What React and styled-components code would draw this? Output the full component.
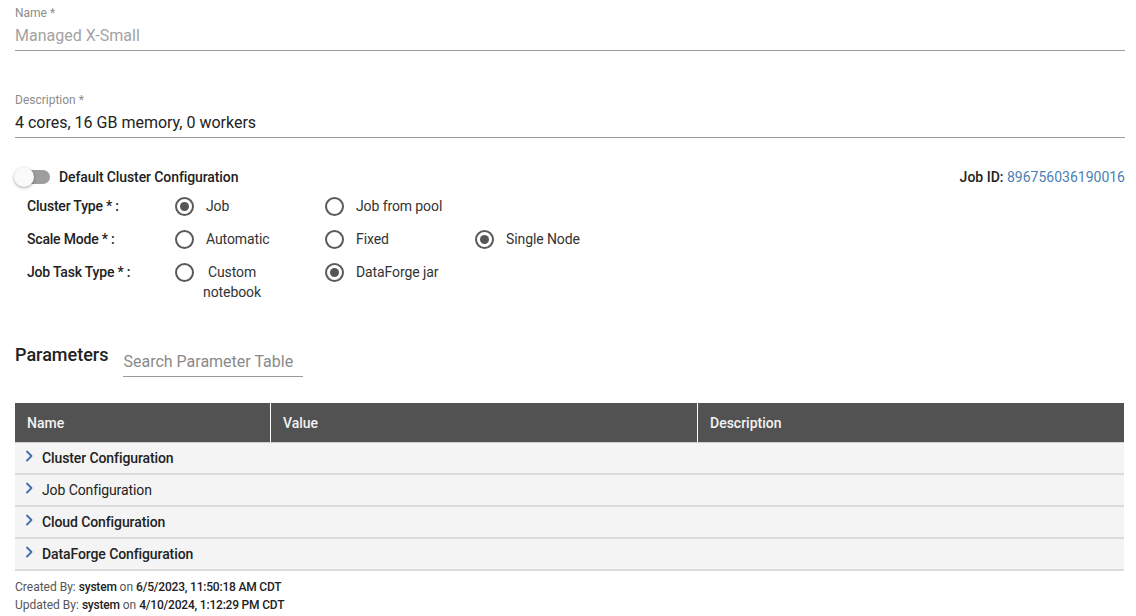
import React, { useState } from 'react';
import styled, { createGlobalStyle } from 'styled-components';

const GlobalStyle = createGlobalStyle`
  body {
    margin: 0;
    font-family: Roboto, "Liberation Sans", sans-serif;
    color: #222;
    background: #fff;
  }
`;

const Page = styled.div`
  padding: 5px 11px 0 15px;
`;

const Field = styled.div`
  margin-top: ${p => p.$top || 0}px;
  border-bottom: 1px solid #9a9a9a;
  padding-bottom: 5px;
`;

const FieldLabel = styled.div`
  font-size: 12px;
  line-height: 16px;
  color: #8c8c8c;
`;

const FieldValue = styled.div`
  margin-top: 5px;
  font-size: 16px;
  line-height: 19px;
  color: ${p => (p.$disabled ? '#a3a3a3' : '#222')};
`;

const ToggleRow = styled.div`
  display: flex;
  align-items: center;
  justify-content: space-between;
  margin-top: 29px;
  height: 20px;
`;

const ToggleLabel = styled.label`
  display: flex;
  align-items: center;
  gap: 9px;
  font-size: 14px;
  font-weight: 500;
  letter-spacing: -0.1px;
  cursor: pointer;
`;

const Track = styled.span`
  position: relative;
  display: inline-block;
  width: 34px;
  height: 14px;
  margin-left: 1px;
  border-radius: 7px;
  background: ${p => (p.$on ? '#8fb0d8' : '#9e9e9e')};
`;

const Thumb = styled.span`
  position: absolute;
  top: -3px;
  left: ${p => (p.$on ? '14px' : '-2px')};
  width: 20px;
  height: 20px;
  border-radius: 50%;
  background: ${p => (p.$on ? '#4a7fb5' : '#fafafa')};
  box-shadow: 0 1px 3px rgba(0, 0, 0, 0.35);
`;

const JobId = styled.div`
  font-size: 14px;
  font-weight: 500;
  span {
    font-weight: 400;
    color: #4a7fb5;
  }
`;

const RadioGroup = styled.div`
  margin-top: 9px;
`;

const RadioRow = styled.div`
  display: flex;
  align-items: flex-start;
  min-height: 33px;
`;

const RowLabel = styled.div`
  width: 148px;
  padding-left: 12px;
  font-size: 14px;
  font-weight: 500;
  letter-spacing: -0.2px;
  line-height: 20px;
`;

const Option = styled.label`
  display: flex;
  align-items: flex-start;
  width: 150px;
  cursor: pointer;
`;

const Circle = styled.span`
  flex: none;
  box-sizing: border-box;
  width: 19px;
  height: 19px;
  margin-top: 1px;
  border: 2px solid #5a5a5a;
  border-radius: 50%;
  display: flex;
  align-items: center;
  justify-content: center;
  &::after {
    content: '';
    width: 9px;
    height: 9px;
    border-radius: 50%;
    background: #555;
    display: ${p => (p.$checked ? 'block' : 'none')};
  }
`;

const OptionText = styled.span`
  margin-left: ${p => (p.$narrow ? 9 : 12)}px;
  max-width: ${p => (p.$narrow ? '58px' : 'none')};
  text-align: center;
  font-size: 14px;
  line-height: 20px;
  letter-spacing: -0.1px;
  color: #333;
`;

const ParamsHeader = styled.div`
  display: flex;
  align-items: flex-end;
  gap: 15px;
  margin-top: 43px;
`;

const Heading = styled.h2`
  margin: 0 0 12px;
  font-size: 18px;
  font-weight: 500;
  line-height: 20px;
`;

const Search = styled.input`
  width: 180px;
  border: none;
  border-bottom: 1px solid #9a9a9a;
  padding: 4px 0 5px;
  font-family: inherit;
  font-size: 16px;
  line-height: 19px;
  color: #222;
  outline: none;
  &::placeholder {
    color: #8a8a8a;
  }
`;

const Table = styled.div`
  margin-top: 26px;
  margin-right: 1px;
`;

const HeadRow = styled.div`
  display: grid;
  grid-template-columns: 255px 1fr 1fr;
  background: #525252;
  border-bottom: 1px solid #cfcfcf;
`;

const HeadCell = styled.div`
  height: 39px;
  display: flex;
  align-items: center;
  padding-left: 12px;
  font-size: 14px;
  font-weight: 500;
  color: #f2f2f2;
  & + & {
    border-left: 1px solid #fff;
  }
`;

const GroupRow = styled.div`
  display: flex;
  align-items: center;
  gap: 5px;
  height: 30px;
  padding-left: 6px;
  background: #f4f4f4;
  border-bottom: 2px solid #dcdcdc;
  font-size: 14px;
  font-weight: ${p => (p.$bold ? 500 : 400)};
  letter-spacing: -0.1px;
  color: #222;
  cursor: pointer;
`;

const Chevron = styled.svg`
  width: 16px;
  height: 16px;
  margin-top: -4px;
  color: #3d6fae;
`;

const Footer = styled.div`
  margin-top: 7px;
  font-size: 12px;
  line-height: 18px;
  color: #555;
  b {
    font-weight: 500;
    letter-spacing: -0.2px;
    color: #222;
  }
`;

const Radio = ({ checked, narrow, children }) => (
  <Option>
    <Circle $checked={checked} />
    <OptionText $narrow={narrow}>{children}</OptionText>
  </Option>
);

const groups = [
  { name: 'Cluster Configuration', bold: true },
  { name: 'Job Configuration', bold: false },
  { name: 'Cloud Configuration', bold: true },
  { name: 'DataForge Configuration', bold: true },
];

const App = () => {
  const [on, setOn] = useState(false);

  return (
    <Page>
      <GlobalStyle />
      <Field>
        <FieldLabel>Name *</FieldLabel>
        <FieldValue $disabled>Managed X-Small</FieldValue>
      </Field>
      <Field $top={41}>
        <FieldLabel>Description *</FieldLabel>
        <FieldValue>4 cores, 16 GB memory, 0 workers</FieldValue>
      </Field>

      <ToggleRow>
        <ToggleLabel onClick={() => setOn(!on)}>
          <Track $on={on}>
            <Thumb $on={on} />
          </Track>
          Default Cluster Configuration
        </ToggleLabel>
        <JobId>
          Job ID: <span>896756036190016</span>
        </JobId>
      </ToggleRow>

      <RadioGroup>
        <RadioRow>
          <RowLabel>Cluster Type * :</RowLabel>
          <Radio checked>Job</Radio>
          <Radio>Job from pool</Radio>
        </RadioRow>
        <RadioRow>
          <RowLabel>Scale Mode * :</RowLabel>
          <Radio>Automatic</Radio>
          <Radio>Fixed</Radio>
          <Radio checked>Single Node</Radio>
        </RadioRow>
        <RadioRow>
          <RowLabel>Job Task Type * :</RowLabel>
          <Radio narrow>Custom notebook</Radio>
          <Radio checked>DataForge jar</Radio>
        </RadioRow>
      </RadioGroup>

      <ParamsHeader>
        <Heading>Parameters</Heading>
        <Search placeholder="Search Parameter Table" />
      </ParamsHeader>

      <Table>
        <HeadRow>
          <HeadCell>Name</HeadCell>
          <HeadCell>Value</HeadCell>
          <HeadCell>Description</HeadCell>
        </HeadRow>
        {groups.map(g => (
          <GroupRow key={g.name} $bold={g.bold}>
            <Chevron viewBox="0 0 16 16" fill="none" stroke="currentColor" strokeWidth="1.8" strokeLinecap="round" strokeLinejoin="round">
              <path d="M6 3.5l4.5 4.5L6 12.5" />
            </Chevron>
            {g.name}
          </GroupRow>
        ))}
      </Table>

      <Footer>
        <div>Created By: <b>system</b> on <b>6/5/2023, 11:50:18 AM CDT</b></div>
        <div>Updated By: <b>system</b> on <b>4/10/2024, 1:12:29 PM CDT</b></div>
      </Footer>
    </Page>
  );
};

export default App;
